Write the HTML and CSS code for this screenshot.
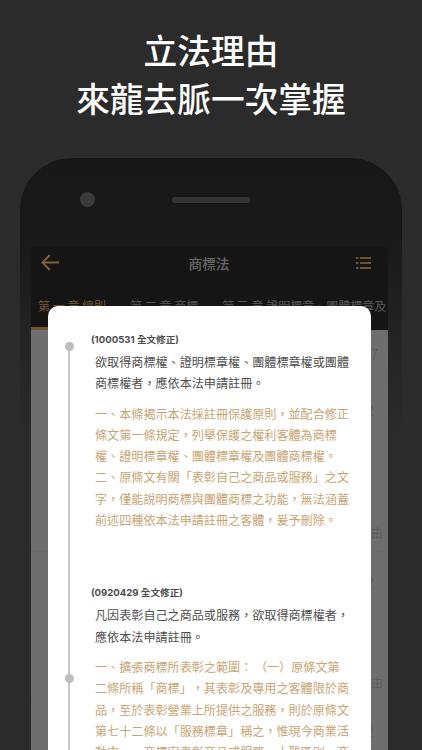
FILE: index.html
```html
<!DOCTYPE html>
<html lang="zh-Hant">
<head>
<meta charset="utf-8">
<title>立法理由</title>
<link rel="stylesheet" href="styles.css">
</head>
<body>
<main class="shot">
  <h1 class="headline">立法理由<br>來龍去脈一次掌握</h1>
  <div class="phone">
    <div class="sensors"><span class="camera"></span><span class="speaker"></span></div>
    <div class="screen">
      <header class="appbar">
        <svg class="back" viewBox="0 0 18 17" aria-hidden="true"><path d="M8.800 1 1.500 8.500 8.800 16M1.500 8.500H18" fill="none" stroke="currentColor" stroke-width="2"/></svg>
        <span class="appbar-title">商標法</span>
        <svg class="list" viewBox="0 0 15 12" aria-hidden="true"><path d="M0 1h2.500M4 1h11M0 6h2.500M4 6h11M0 11h2.500M4 11h11" fill="none" stroke="currentColor" stroke-width="2"/></svg>
      </header>
      <nav class="tabs">
        <span class="tab tab-active">第 一 章 總則</span>
        <span class="tab">第 二 章 商標</span>
        <span class="tab">第 三 章 證明標章、團體標章及</span>
      </nav>
      <div class="rows">
        <div class="row row-a">7</div>
        <div class="row row-b">2</div>
        <div class="row row-c">理由</div>
        <div class="row row-d">2</div>
        <div class="row row-e">理由</div>
        <div class="row row-f">2</div>
      </div>
    </div>
    <section class="card">
      <div class="rail"><span class="dot dot-one"></span><span class="dot dot-two"></span></div>
      <div class="history">
        <article class="entry">
          <h2 class="stamp">(1000531 全文修正)</h2>
          <p class="law">欲取得商標權、證明標章權、團體標章權或團體商標權者，應依本法申請註冊。</p>
          <p class="reason">一、本條揭示本法採註冊保護原則，並配合修正條文第一條規定，列舉保護之權利客體為商標權、證明標章權、團體標章權及團體商標權。<br>二、原條文有關「表彰自己之商品或服務」之文字，僅能說明商標與團體商標之功能，無法涵蓋前述四種依本法申請註冊之客體，爰予刪除。</p>
        </article>
        <article class="entry">
          <h2 class="stamp">(0920429 全文修正)</h2>
          <p class="law">凡因表彰自己之商品或服務，欲取得商標權者，應依本法申請註冊。</p>
          <p class="reason">一、擴張商標所表彰之範圍： （一）原條文第二條所稱「商標」，其表彰及專用之客體限於商品，至於表彰營業上所提供之服務，則於原條文第七十二條以「服務標章」稱之，惟現今商業活動中，一商標安表彰商品或服務，大難區別，商</p>
        </article>
      </div>
    </section>
  </div>
</main>
</body>
</html>
```
FILE: styles.css
```css
* { box-sizing: border-box; }
html, body { margin: 0; height: 100%; }
body {
  width: 422px;
  height: 750px;
  overflow: hidden;
  background: #2b2b2b;
  font-family: "Noto Sans CJK TC", "Noto Sans", sans-serif;
}
.shot { height: 750px; overflow: hidden; padding-top: 26px; }
.headline {
  margin: 0;
  color: #fff;
  font-size: 33.700px;
  font-weight: 500;
  line-height: 48px;
  text-align: center;
}
.phone {
  position: relative;
  margin: 36px 20px 0;
  height: 620px;
  background: linear-gradient(#171717 0, #1a1a1a 100px, #232323 172px, #2b2b2b 280px);
  border-radius: 52px 52px 0 0;
  padding: 0 14px 0 11px;
}
.sensors {
  height: 89px;
  display: flex;
  align-items: center;
  padding: 0 0 0 49px;
}
.camera { width: 15px; height: 15px; border-radius: 50%; background: #3a3a3a; position: relative; top: -3px; }
.speaker { width: 78px; height: 6px; border-radius: 3px; background: #333; margin-left: 77px; position: relative; top: -3px; }
.screen { background: #151515; }
.appbar {
  height: 33px;
  display: flex;
  align-items: center;
  justify-content: space-between;
  padding: 0 17px 2px 10px;
}
.back { width: 18px; height: 17px; color: #7a5f35; }
.list { width: 15px; height: 12px; color: #6d5430; }
.appbar-title { color: #666; font-size: 13.700px; font-weight: 500; margin-left: 3px; }
.tabs {
  height: 50px;
  padding: 17px 0 0 7px;
  display: flex;
  gap: 24px;
  white-space: nowrap;
  overflow: hidden;
  font-size: 12px;
  line-height: 18px;
  color: #555;
}
.tab-active { color: #6f5630; position: relative; }
.tab-active::after {
  content: "";
  position: absolute;
  left: -7px;
  right: -7px;
  top: 30px;
  height: 3px;
  background: #6f5630;
}
.rows {
  height: 420px;
  background: #6e6e6e;
  color: #555;
  font-size: 14px;
  font-weight: 300;
  line-height: 18px;
  text-align: right;
}
.row-a { height: 71px; padding: 15px 10px 0 0; }
.row-b { height: 123px; padding-right: 14px; }
.row-c { height: 28px; margin-bottom: 21px; padding-right: 5px; font-size: 12px; border-bottom: 1px solid #6a6a6a; }
.row-d { height: 101px; padding-right: 14px; }
.row-e { height: 26px; margin-bottom: 22px; padding-right: 5px; font-size: 12px; border-bottom: 1px solid #6a6a6a; }
.row-f { padding-right: 14px; }
.card {
  position: absolute;
  left: 28px;
  top: 148px;
  width: 323px;
  height: 472px;
  background: #fff;
  border-radius: 10px 10px 0 0;
  overflow: hidden;
  display: flex;
  padding: 28px 22px 0 43px;
}
.rail {
  position: absolute;
  left: 20px;
  top: 40px;
  bottom: 0;
  width: 2px;
  background: #c6c6c6;
}
.dot { position: absolute; left: -3.500px; width: 9px; height: 9px; border-radius: 50%; background: #bdbdbd; }
.dot-one { top: -4px; }
.dot-two { top: 328px; }
.history { width: 258px; }
.entry + .entry { margin-top: 57px; }
.stamp {
  margin: 0;
  font-family: Inter, "Noto Sans CJK TC", sans-serif;
  font-size: 9.600px;
  font-weight: 700;
  line-height: 12px;
  color: #4d4d4d;
}
.law, .reason {
  margin: 0;
  padding-left: 4px;
  font-size: 12.100px;
  line-height: 21.300px;
  text-spacing-trim: space-all;
}
.law { margin-top: 5px; color: #505050; }
.reason { margin-top: 9px; color: #c8a473; }
```
